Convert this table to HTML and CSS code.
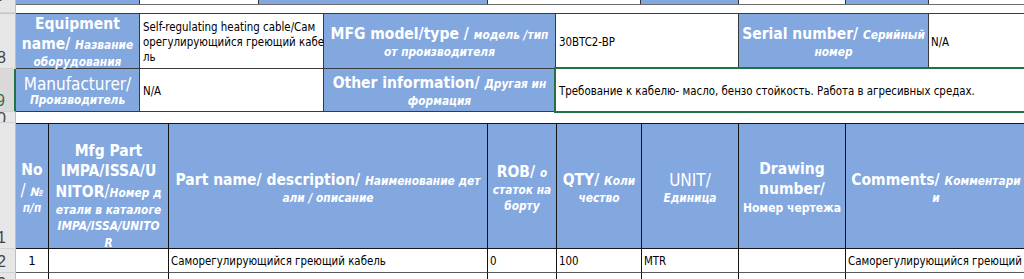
FILE: index.html
```html
<!DOCTYPE html>
<html lang="ru">
<head>
<meta charset="utf-8">
<title>Sheet</title>
<link rel="stylesheet" href="styles.css">
</head>
<body>
<div class="sheet">
  <div class="band">
    <div class="rh rh-top"><span>7</span></div>
    <div class="band-body">
      <div class="strip">
        <div class="sb blue"></div><div class="sb"></div><div class="sb blue"></div><div class="sb"></div><div class="sb blue"></div><div class="sb"></div><div class="sb blue"></div><div class="sb last"></div>
      </div>
    </div>
  </div>

  <div class="info">
    <div class="rh r8"><span>8</span></div>
    <div class="ih t8"><div class="tx"><span class="b">Equipment</span><br><span class="b">name/ </span><span class="s">Название</span><br><span class="s">оборудования</span></div></div>
    <div class="iv t8 wrap"><div>Self-regulating heating cable/Сам<br>орегулирующийся греющий кабе<br>ль</div></div>
    <div class="ih t8"><div class="tx"><span class="b">MFG model/type / </span><span class="s">модель /тип</span><br><span class="s">от производителя</span></div></div>
    <div class="iv t8"><div>30BTC2-BP</div></div>
    <div class="ih t8"><div class="tx"><span class="b">Serial number/ </span><span class="s">Серийный</span><br><span class="s">номер</span></div></div>
    <div class="iv t8 last"><div>N/A</div></div>

    <div class="rh r9 sel"><span>9</span></div>
    <div class="ih"><div class="tx tight"><span class="n">Manufacturer/</span><br><span class="s">Производитель</span></div></div>
    <div class="iv"><div>N/A</div></div>
    <div class="ih"><div class="tx"><span class="b">Other information/ </span><span class="s">Другая ин</span><br><span class="s">формация</span></div></div>
    <div class="iv span3 active"><div>Требование к кабелю- масло, бензо стойкость. Работа в агресивных средах.</div></div>
  </div>

  <div class="blank">
    <div class="rh r10"><span>0</span></div>
    <div class="blank-body"></div>
  </div>

  <div class="table hdr">
    <div class="rh r11"><span>1</span></div>
    <div class="th"><div class="tx"><span class="b">No</span><br><span class="n">/ </span><span class="s">№</span><br><span class="s">п/п</span></div></div>
    <div class="th bottom"><div class="tx"><span class="b">Mfg Part</span><br><span class="b">IMPA/ISSA/U</span><br><span class="b">NITOR</span><span class="n">/</span><span class="s">Номер д</span><br><span class="s">етали в каталоге</span><br><span class="s">IMPA/ISSA/UNITO</span><br><span class="s">R</span></div></div>
    <div class="th"><div class="tx"><span class="b">Part name/ description/ </span><span class="s">Наименование дет</span><br><span class="s">али / описание</span></div></div>
    <div class="th"><div class="tx"><span class="b">ROB/ </span><span class="s">о</span><br><span class="s">статок на</span><br><span class="s">борту</span></div></div>
    <div class="th"><div class="tx"><span class="b">QTY/ </span><span class="s">Коли</span><br><span class="s">чество</span></div></div>
    <div class="th"><div class="tx"><span class="n">UNIT/</span><br><span class="s">Единица</span></div></div>
    <div class="th"><div class="tx"><span class="b">Drawing</span><br><span class="b">number/</span><br><span class="sn">Номер чертежа</span></div></div>
    <div class="th last"><div class="tx"><span class="b">Comments/ </span><span class="s">Комментари</span><br><span class="s">и</span></div></div>
  </div>

  <div class="table row">
    <div class="rh r12"><span>2</span></div>
    <div class="td num">1</div>
    <div class="td"></div>
    <div class="td">Саморегулирующийся греющий кабель</div>
    <div class="td">0</div>
    <div class="td">100</div>
    <div class="td">MTR</div>
    <div class="td"></div>
    <div class="td last">Саморегулирующийся греющий кабель</div>
  </div>

  <div class="table row r13row">
    <div class="rh r13"><span>3</span></div>
    <div class="td num"></div>
    <div class="td"></div>
    <div class="td"></div>
    <div class="td"></div>
    <div class="td"></div>
    <div class="td"></div>
    <div class="td"></div>
    <div class="td last"></div>
  </div>
</div>
</body>
</html>
```

FILE: styles.css
```css
html, body {
  margin: 0;
  padding: 0;
  background: #ffffff;
}

body {
  width: 1024px;
  height: 279px;
  overflow: hidden;
  font-family: "DejaVu Sans Condensed", "DejaVu Sans", sans-serif;
  font-stretch: semi-condensed;
  font-size: 11.4px;
  color: #000;
}

.sheet {
  width: 1024px;
  display: flex;
  flex-direction: column;
}

/* ---------- row headers ---------- */
.rh {
  box-sizing: border-box;
  background: #e6e6e6;
  border-right: 1px solid #bdbdbd;
  border-bottom: 1px solid #d2d2d2;
  overflow: hidden;
  display: flex;
  justify-content: flex-end;
  align-items: flex-end;
  padding-right: 9px;
  padding-bottom: 2px;
  font-family: "Liberation Sans", Arial, sans-serif;
  font-stretch: normal;
  font-size: 16px;
  line-height: 16px;
  color: #444;
}

.rh span {
  flex: none;
}

.rh.sel {
  background: #d9d9d9;
  color: #3d6b50;
  border-right: 2px solid #217346;
}

.rh-top {
  align-items: flex-start;
  padding-bottom: 0;
}

.rh-top span {
  margin-top: -12px;
}

/* ---------- top band (row 7) ---------- */
.band {
  display: grid;
  grid-template-columns: 16px 1fr;
  height: 13px;
}

.band-body {
  display: flex;
  flex-direction: column;
}

.strip {
  display: grid;
  grid-template-columns: 124px 119px 229px 153px 98px 107px 83px 1fr;
  height: 5px;
  box-sizing: border-box;
  border-bottom: 1px solid #6b6b6b;
}

.sb {
  border-right: 1px solid #333;
  background: #fff;
}

.sb.blue {
  background: #83a8e0;
}

.sb.last {
  border-right: none;
}

/* ---------- info block (rows 8-9) ---------- */
.info {
  display: grid;
  grid-template-columns: 16px 124px 184px 232px 183px 190px 95px;
  grid-template-rows: 56px 43px;
}

.info .r8 {
  border-top: 1px solid #c6c6c6;
}

.ih,
.iv {
  box-sizing: border-box;
  border-right: 1px solid #3a3a3a;
  border-bottom: 1px solid #3a3a3a;
  display: flex;
  align-items: center;
  white-space: nowrap;
}

.t8 {
  border-top: 1px solid #3a3a3a;
}

.ih {
  background: #83a8e0;
  color: #fff;
  justify-content: center;
  text-align: center;
  padding-top: 3px;
}

.iv {
  background: #fff;
  padding-left: 3px;
  padding-top: 2px;
  line-height: 15px;
}

.iv.last {
  border-right: none;
  padding-left: 2px;
}

.span3 {
  grid-column: span 3;
  border-right: none;
  position: relative;
}

.active::after {
  content: "";
  position: absolute;
  left: -2px;
  top: -2px;
  right: -4px;
  bottom: -2px;
  border: 2px solid #217346;
}

/* ---------- text styles ---------- */
.tx {
  line-height: 16.5px;
  font-size: 11.8px;
}

.tx.tight {
  line-height: 14px;
}

.b {
  font-weight: bold;
  font-size: 15.5px;
  line-height: 20px;
}

.n {
  font-weight: normal;
  font-size: 17px;
  line-height: 20px;
}

.tight .n {
  line-height: 17px;
}

.s {
  font-weight: bold;
  font-style: italic;
  font-size: 11.8px;
}

.sn {
  font-weight: bold;
  font-size: 12px;
  line-height: 18px;
}

/* ---------- blank row 10 ---------- */
.blank {
  display: grid;
  grid-template-columns: 16px 1fr;
  height: 11px;
}

.blank .rh {
  padding-bottom: 0;
  align-items: flex-start;
}

.blank .rh span {
  margin-top: -1px;
}

/* ---------- parts table ---------- */
.table {
  display: grid;
  grid-template-columns: 16px 33px 120px 319px 69px 85px 97px 107px 180px;
}

.hdr {
  grid-template-rows: 126px;
}

.th {
  box-sizing: border-box;
  background: #83a8e0;
  color: #fff;
  border-top: 1px solid #151515;
  border-right: 1px solid #151515;
  border-bottom: 1px solid #151515;
  display: flex;
  align-items: center;
  justify-content: center;
  text-align: center;
  white-space: nowrap;
  padding-top: 4px;
}

.th.bottom {
  align-items: flex-end;
  padding-top: 0;
  padding-bottom: 0;
}

.th.bottom .tx {
  margin-bottom: -3px;
}

.th.last {
  border-right: none;
}

.hdr .rh {
  padding-bottom: 2px;
}

.row {
  grid-template-rows: 24px;
}

.td {
  box-sizing: border-box;
  border-right: 1px solid #151515;
  border-bottom: 1px solid #5a5a5a;
  display: flex;
  align-items: flex-end;
  padding-left: 2px;
  padding-bottom: 3px;
  line-height: 15px;
  white-space: nowrap;
  overflow: hidden;
}

.td.num {
  justify-content: center;
  padding-left: 0;
  font-size: 13px;
  padding-bottom: 4px;
}

.td.last {
  border-right: none;
}

.r13row {
  grid-template-rows: 10px;
}

.r13row .td {
  border-bottom: none;
}

.r13 {
  align-items: flex-start;
  padding-bottom: 0;
}

.r13 span {
  margin-top: 3px;
}
```
